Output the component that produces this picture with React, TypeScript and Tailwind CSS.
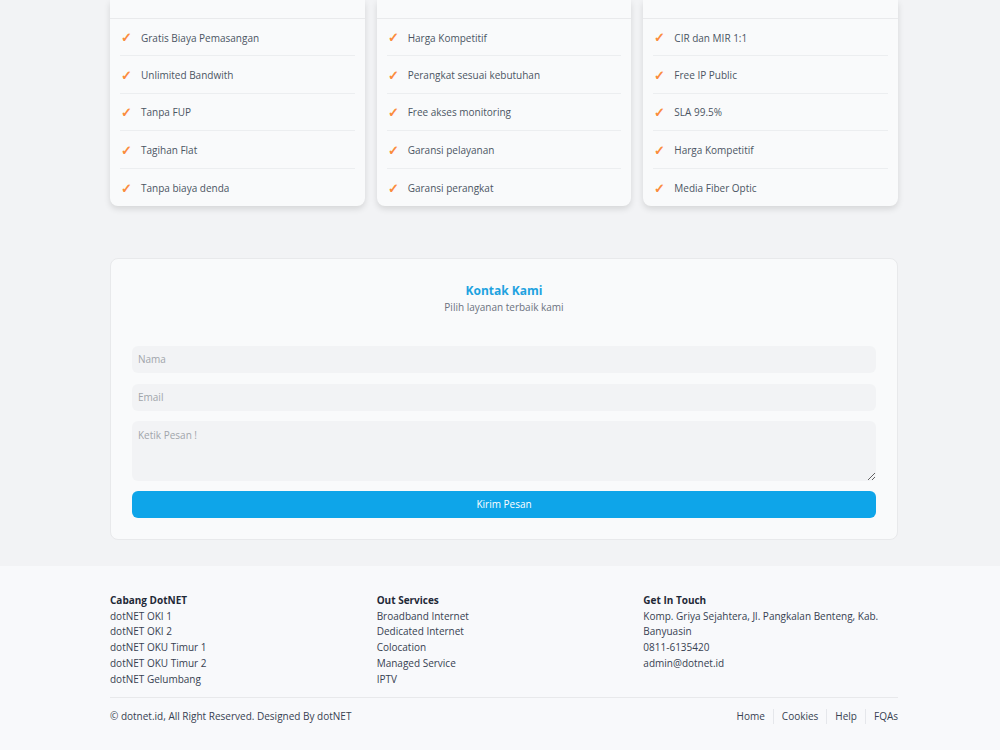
import React from "react";

const cards = [
  ["Gratis Biaya Pemasangan", "Unlimited Bandwith", "Tanpa FUP", "Tagihan Flat", "Tanpa biaya denda"],
  ["Harga Kompetitif", "Perangkat sesuai kebutuhan", "Free akses monitoring", "Garansi pelayanan", "Garansi perangkat"],
  ["CIR dan MIR 1:1", "Free IP Public", "SLA 99.5%", "Harga Kompetitif", "Media Fiber Optic"],
];

const font = { fontFamily: '"Open Sans", "Noto Sans", sans-serif' };

export default function App() {
  return (
    <div className="min-h-[750px] bg-[#f2f3f5] text-[10px] text-[#4b5563]" style={font}>
      <div className="ml-[110px] w-[788px]">
        <div className="grid grid-cols-3 gap-3">
          {cards.map((items, i) => (
            <div key={i} className="rounded-b-lg bg-[#f9fafb] shadow-[0_3px_6px_rgba(0,0,0,0.12)]">
              <div className="h-[19px] border-b border-[#e9eaec]" />
              <div className="px-[10px]">
                {items.map((t, j) => (
                  <div
                    key={j}
                    className={`flex h-[37.4px] items-center pt-[2px] ${j < items.length - 1 ? "border-b border-[#eceef0]" : ""}`}
                  >
                    <span className="w-[21px] pl-[1px] text-[13px] font-semibold text-[#fb8c3c]">✓</span>
                    <span className="text-[10px] text-[#4b5563]">{t}</span>
                  </div>
                ))}
              </div>
            </div>
          ))}
        </div>

        <div className="mt-[52px] rounded-lg border border-[#e8e9eb] bg-[#f9fafb] px-[21px] pb-[21px] pt-[23px]">
          <div className="flex flex-col items-center">
            <div className="text-[12px] font-bold leading-[18px] text-[#1ea2e0]">Kontak Kami</div>
            <div className="text-[10px] leading-[14px] text-[#6b7280]">Pilih layanan terbaik kami</div>
          </div>
          <div className="mt-[32px] flex flex-col gap-[10px]">
            <input
              placeholder="Nama"
              className="h-[27px] rounded-md bg-[#f2f3f5] px-[6px] text-[10px] outline-none placeholder:text-[#a1a5ab]"
              style={font}
            />
            <input
              placeholder="Email"
              className="mt-[1px] h-[27px] rounded-md bg-[#f2f3f5] px-[6px] text-[10px] outline-none placeholder:text-[#a1a5ab]"
              style={font}
            />
            <textarea
              placeholder="Ketik Pesan !"
              className="h-[60px] rounded-md bg-[#f2f3f5] px-[6px] py-[7px] text-[10px] outline-none placeholder:text-[#a1a5ab]"
              style={font}
            />
            <button className="h-[27px] rounded-md bg-[#0ea5e9] text-[10px] text-white" style={font}>
              Kirim Pesan
            </button>
          </div>
        </div>
      </div>

      <div className="mt-[26px] bg-[#f8f9fb] pb-[40px] pt-[27px]">
        <div className="ml-[110px] w-[788px]">
          <div className="grid grid-cols-3 gap-3 text-[10px] leading-[15.75px] text-[#374151]">
            <div>
              <div className="font-bold text-[#1f2937]">Cabang DotNET</div>
              <div>dotNET OKI 1</div>
              <div>dotNET OKI 2</div>
              <div>dotNET OKU Timur 1</div>
              <div>dotNET OKU Timur 2</div>
              <div>dotNET Gelumbang</div>
            </div>
            <div>
              <div className="font-bold text-[#1f2937]">Out Services</div>
              <div>Broadband Internet</div>
              <div>Dedicated Internet</div>
              <div>Colocation</div>
              <div>Managed Service</div>
              <div>IPTV</div>
            </div>
            <div>
              <div className="font-bold text-[#1f2937]">Get In Touch</div>
              <div>
                Komp. Griya Sejahtera, Jl. Pangkalan Benteng, Kab.
                <br />
                Banyuasin
              </div>
              <div>0811-6135420</div>
              <div>admin@dotnet.id</div>
            </div>
          </div>
          <div className="mt-[10px] flex items-center justify-between border-t border-[#e8e9eb] pt-[11px] text-[10px] text-[#374151]">
            <div>© dotnet.id, All Right Reserved. Designed By dotNET</div>
            <div className="flex items-center">
              <span className="pr-[8px]">Home</span>
              <span className="border-l border-[#e5e7eb] px-[8px]">Cookies</span>
              <span className="border-l border-[#e5e7eb] px-[8px]">Help</span>
              <span className="border-l border-[#e5e7eb] pl-[8px]">FQAs</span>
            </div>
          </div>
        </div>
      </div>
    </div>
  );
}
